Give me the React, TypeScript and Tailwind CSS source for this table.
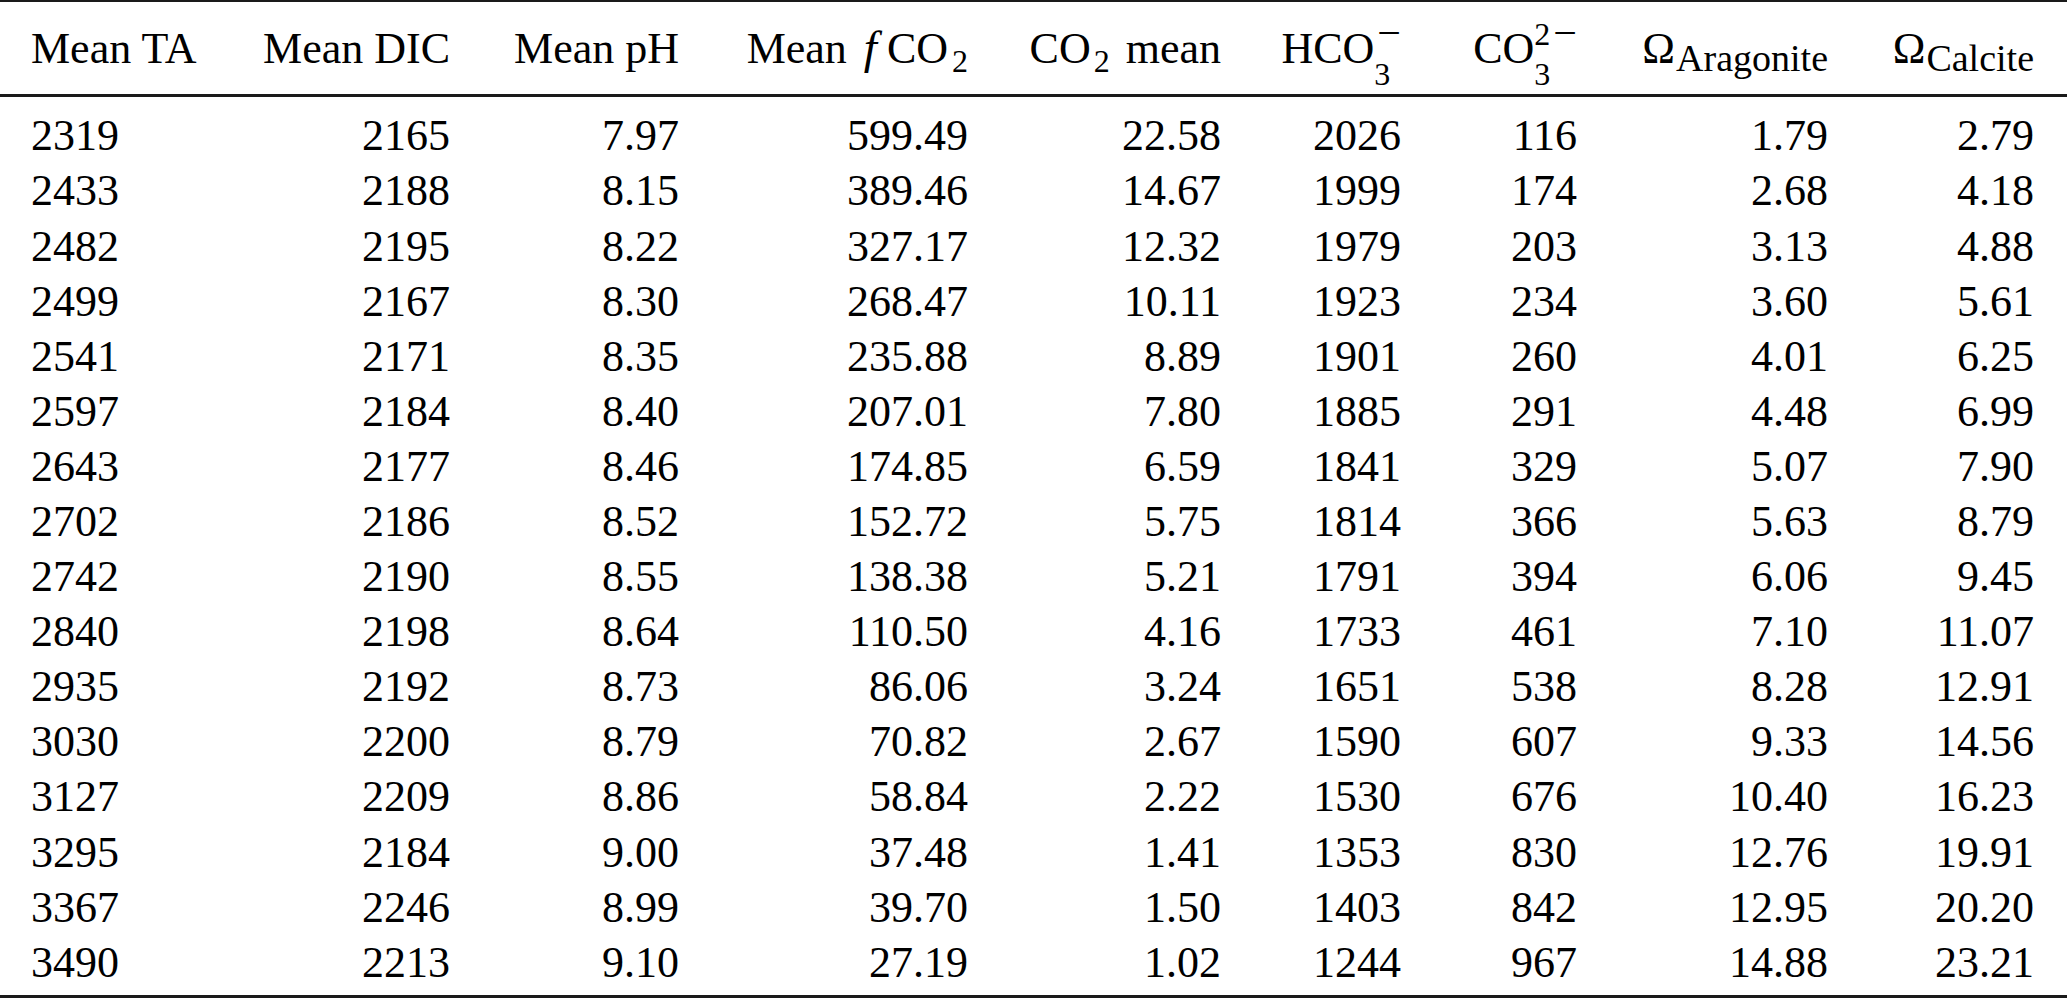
import React from 'react';

// Carbonate chemistry summary table (booktabs style)
const rows: string[][] = [
  ['2319', '2165', '7.97', '599.49', '22.58', '2026', '116', '1.79', '2.79'],
  ['2433', '2188', '8.15', '389.46', '14.67', '1999', '174', '2.68', '4.18'],
  ['2482', '2195', '8.22', '327.17', '12.32', '1979', '203', '3.13', '4.88'],
  ['2499', '2167', '8.30', '268.47', '10.11', '1923', '234', '3.60', '5.61'],
  ['2541', '2171', '8.35', '235.88', '8.89', '1901', '260', '4.01', '6.25'],
  ['2597', '2184', '8.40', '207.01', '7.80', '1885', '291', '4.48', '6.99'],
  ['2643', '2177', '8.46', '174.85', '6.59', '1841', '329', '5.07', '7.90'],
  ['2702', '2186', '8.52', '152.72', '5.75', '1814', '366', '5.63', '8.79'],
  ['2742', '2190', '8.55', '138.38', '5.21', '1791', '394', '6.06', '9.45'],
  ['2840', '2198', '8.64', '110.50', '4.16', '1733', '461', '7.10', '11.07'],
  ['2935', '2192', '8.73', '86.06', '3.24', '1651', '538', '8.28', '12.91'],
  ['3030', '2200', '8.79', '70.82', '2.67', '1590', '607', '9.33', '14.56'],
  ['3127', '2209', '8.86', '58.84', '2.22', '1530', '676', '10.40', '16.23'],
  ['3295', '2184', '9.00', '37.48', '1.41', '1353', '830', '12.76', '19.91'],
  ['3367', '2246', '8.99', '39.70', '1.50', '1403', '842', '12.95', '20.20'],
  ['3490', '2213', '9.10', '27.19', '1.02', '1244', '967', '14.88', '23.21'],
];

const grid =
  'grid grid-cols-[199px_220px_229px_289px_253px_180px_176px_251px_206px] pl-[31px] pr-[33px] whitespace-nowrap';

export default function App() {
  return (
    <div
      className="w-[2067px] h-[1007px] bg-white text-black text-[44px]"
      style={{ fontFamily: '"Liberation Serif", "Times New Roman", serif' }}
    >
      <div className="h-[2px] bg-[#1a1a1a]" />

      {/* header */}
      <div className={`${grid} leading-[55.33px] pt-[19px] pb-[18px]`}>
        <div>Mean TA</div>
        <div className="text-right">Mean DIC</div>
        <div className="text-right">Mean pH</div>
        <div className="text-right">
          Mean <span className="italic ml-[6px] mr-[10px] text-[47px] leading-none">f</span>CO
          <span className="relative top-[9px] ml-[4px] text-[32px] leading-none">2</span>
        </div>
        <div className="text-right">
          CO<span className="relative top-[9px] ml-[3px] mr-[16px] text-[32px] leading-none">2</span>mean
        </div>
        <div className="text-right">
          HCO
          <span className="relative top-[22px] inline-block w-0 text-[32px] leading-none">3</span>
          <span className="relative -top-[16px] ml-[3px] text-[42px] leading-[30px]">−</span>
        </div>
        <div className="text-right">
          CO
          <span className="relative top-[22px] inline-block w-0 text-[32px] leading-none">3</span>
          <span className="relative -top-[18px] text-[32px] leading-none">2</span>
          <span className="relative -top-[16px] ml-[3px] text-[42px] leading-[30px]">−</span>
        </div>
        <div className="text-right">
          Ω<span className="relative top-[8px] ml-[1px] text-[38px] leading-none">Aragonite</span>
        </div>
        <div className="text-right">
          Ω<span className="relative top-[8px] ml-[1px] text-[38px] leading-none">Calcite</span>
        </div>
      </div>

      <div className="h-[3px] bg-[#1a1a1a]" />

      {/* body */}
      <div className="pt-[11px] pb-[5px]">
        {rows.map((r, i) => (
          <div key={i} className={`${grid} leading-[55.1px]`}>
            {r.map((v, j) => (
              <div key={j} className={j === 0 ? 'text-left' : 'text-right'}>
                {v}
              </div>
            ))}
          </div>
        ))}
      </div>

      <div className="h-[3px] bg-[#1a1a1a]" />
    </div>
  );
}
